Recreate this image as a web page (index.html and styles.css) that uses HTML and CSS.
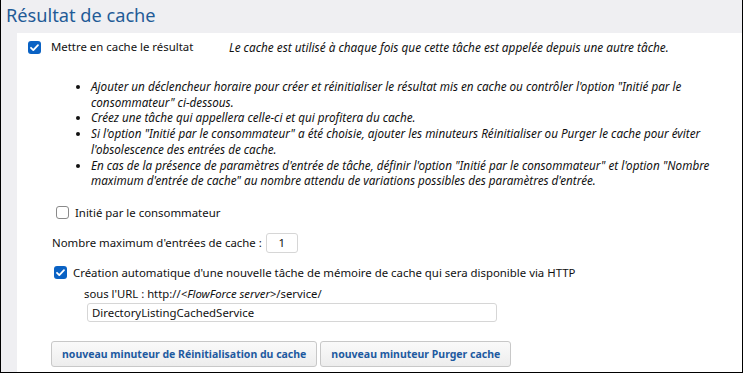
FILE: index.html
```html
<!DOCTYPE html>
<html lang="fr">
<head>
    <meta charset="UTF-8">
    <title>Résultat de cache</title>
    <link rel="stylesheet" href="styles.css">
</head>
<body>
    <div class="frame">
        <h1 class="title">Résultat de cache</h1>
        <div class="panel">
            <div class="main-row">
                <span class="box checked"><svg viewBox="0 0 13 13"><path d="M3 6.8l2.3 2.3 4.7-5" fill="none" stroke="#fff" stroke-width="1.8" stroke-linecap="round" stroke-linejoin="round"/></svg></span>
                <span class="main-label">Mettre en cache le résultat</span>
                <span class="note">Le cache est utilisé à chaque fois que cette tâche est appelée depuis une autre tâche.</span>
            </div>

            <ul class="hints">
                <li>Ajouter un déclencheur horaire pour créer et réinitialiser le résultat mis en cache ou contrôler l'option "Initié par le consommateur" ci-dessous.</li>
                <li>Créez une tâche qui appellera celle-ci et qui profitera du cache.</li>
                <li>Si l'option "Initié par le consommateur" a été choisie, ajouter les minuteurs Réinitialiser ou Purger le cache pour éviter l'obsolescence des entrées de cache.</li>
                <li>En cas de la présence de paramètres d'entrée de tâche, définir l'option "Initié par le consommateur" et l'option "Nombre maximum d'entrée de cache" au nombre attendu de variations possibles des paramètres d'entrée.</li>
            </ul>

            <div class="check-row consumer">
                <span class="box"></span>
                <span>Initié par le consommateur</span>
            </div>

            <div class="max-row">
                <span>Nombre maximum d'entrées de cache :</span>
                <span class="field small">1</span>
            </div>

            <div class="check-row auto">
                <span class="box checked"><svg viewBox="0 0 13 13"><path d="M3 6.8l2.3 2.3 4.7-5" fill="none" stroke="#fff" stroke-width="1.8" stroke-linecap="round" stroke-linejoin="round"/></svg></span>
                <span>Création automatique d'une nouvelle tâche de mémoire de cache qui sera disponible via HTTP</span>
            </div>
            <div class="url">sous l'URL : http://<i>&lt;FlowForce server&gt;</i>/service/</div>
            <div class="field wide">DirectoryListingCachedService</div>

            <div class="buttons">
                <button class="btn">nouveau minuteur de Réinitialisation du cache</button>
                <button class="btn">nouveau minuteur Purger cache</button>
            </div>
        </div>
    </div>
</body>
</html>
```
FILE: styles.css
```css
body {
    margin: 0;
    font-family: 'Noto Sans', 'Open Sans', sans-serif;
    color: #111;
}
.frame {
    width: 743px;
    height: 373px;
    box-sizing: border-box;
    border: 1px solid #000;
    border-top: none;
    background: #efeff2;
    display: flex;
    flex-direction: column;
    overflow: hidden;
}
.title {
    margin: 0;
    height: 33px;
    padding-left: 5px;
    font-size: 18.2px;
    font-weight: normal;
    line-height: 31px;
    color: #1f5b97;
}
.panel {
    flex: 1;
    margin-left: 16px;
    background: #fff;
    font-size: 11.4px;
    line-height: 14px;
    padding: 7px 0 0 11px;
}
.main-row {
    display: flex;
    align-items: center;
    height: 14px;
}
.main-label { margin-left: 10px; width: 178px; }
.note {
    font-style: italic;
    font-size: 11.8px;
}
.box {
    width: 13px;
    height: 13px;
    box-sizing: border-box;
    border: 1.5px solid #8a8a8a;
    border-radius: 3px;
    flex: none;
    display: inline-block;
}
.box.checked {
    background: #0a62c4;
    border: none;
}
.box svg { width: 13px; height: 13px; display: block; }
.hints {
    margin: 25px 0 0 0;
    padding-left: 63px;
    width: 622px;
    font-style: italic;
    font-size: 11.7px;
    line-height: 15.7px;
}
.check-row {
    display: flex;
    align-items: center;
    gap: 6px;
    height: 14px;
}
.consumer { margin: 17px 0 0 28px; }
.max-row {
    display: flex;
    align-items: center;
    margin: 13px 0 0 24px;
}
.field {
    box-sizing: border-box;
    border: 1px solid #d6d6d6;
    border-radius: 3px;
    background: #fff;
    display: inline-block;
}
.field.small {
    width: 32px;
    height: 20px;
    margin-left: 4px;
    text-align: center;
    line-height: 18px;
}
.auto { margin: 13px 0 0 26px; }
.url {
    margin: 6px 0 0 56px;
    font-size: 11.3px;
    line-height: 16px;
}
.field.wide {
    margin: 1px 0 0 59px;
    width: 410px;
    height: 19px;
    line-height: 17px;
    padding-left: 4px;
}
.buttons {
    display: flex;
    gap: 3px;
    margin: 19px 0 0 23px;
}
.btn {
    font-family: inherit;
    font-size: 10.5px;
    font-weight: bold;
    color: #1e5aa0;
    background: linear-gradient(#fafafa, #ededed);
    border: 1px solid #c8c8c8;
    border-radius: 3px;
    height: 26px;
    padding: 0 10px;
}
```
